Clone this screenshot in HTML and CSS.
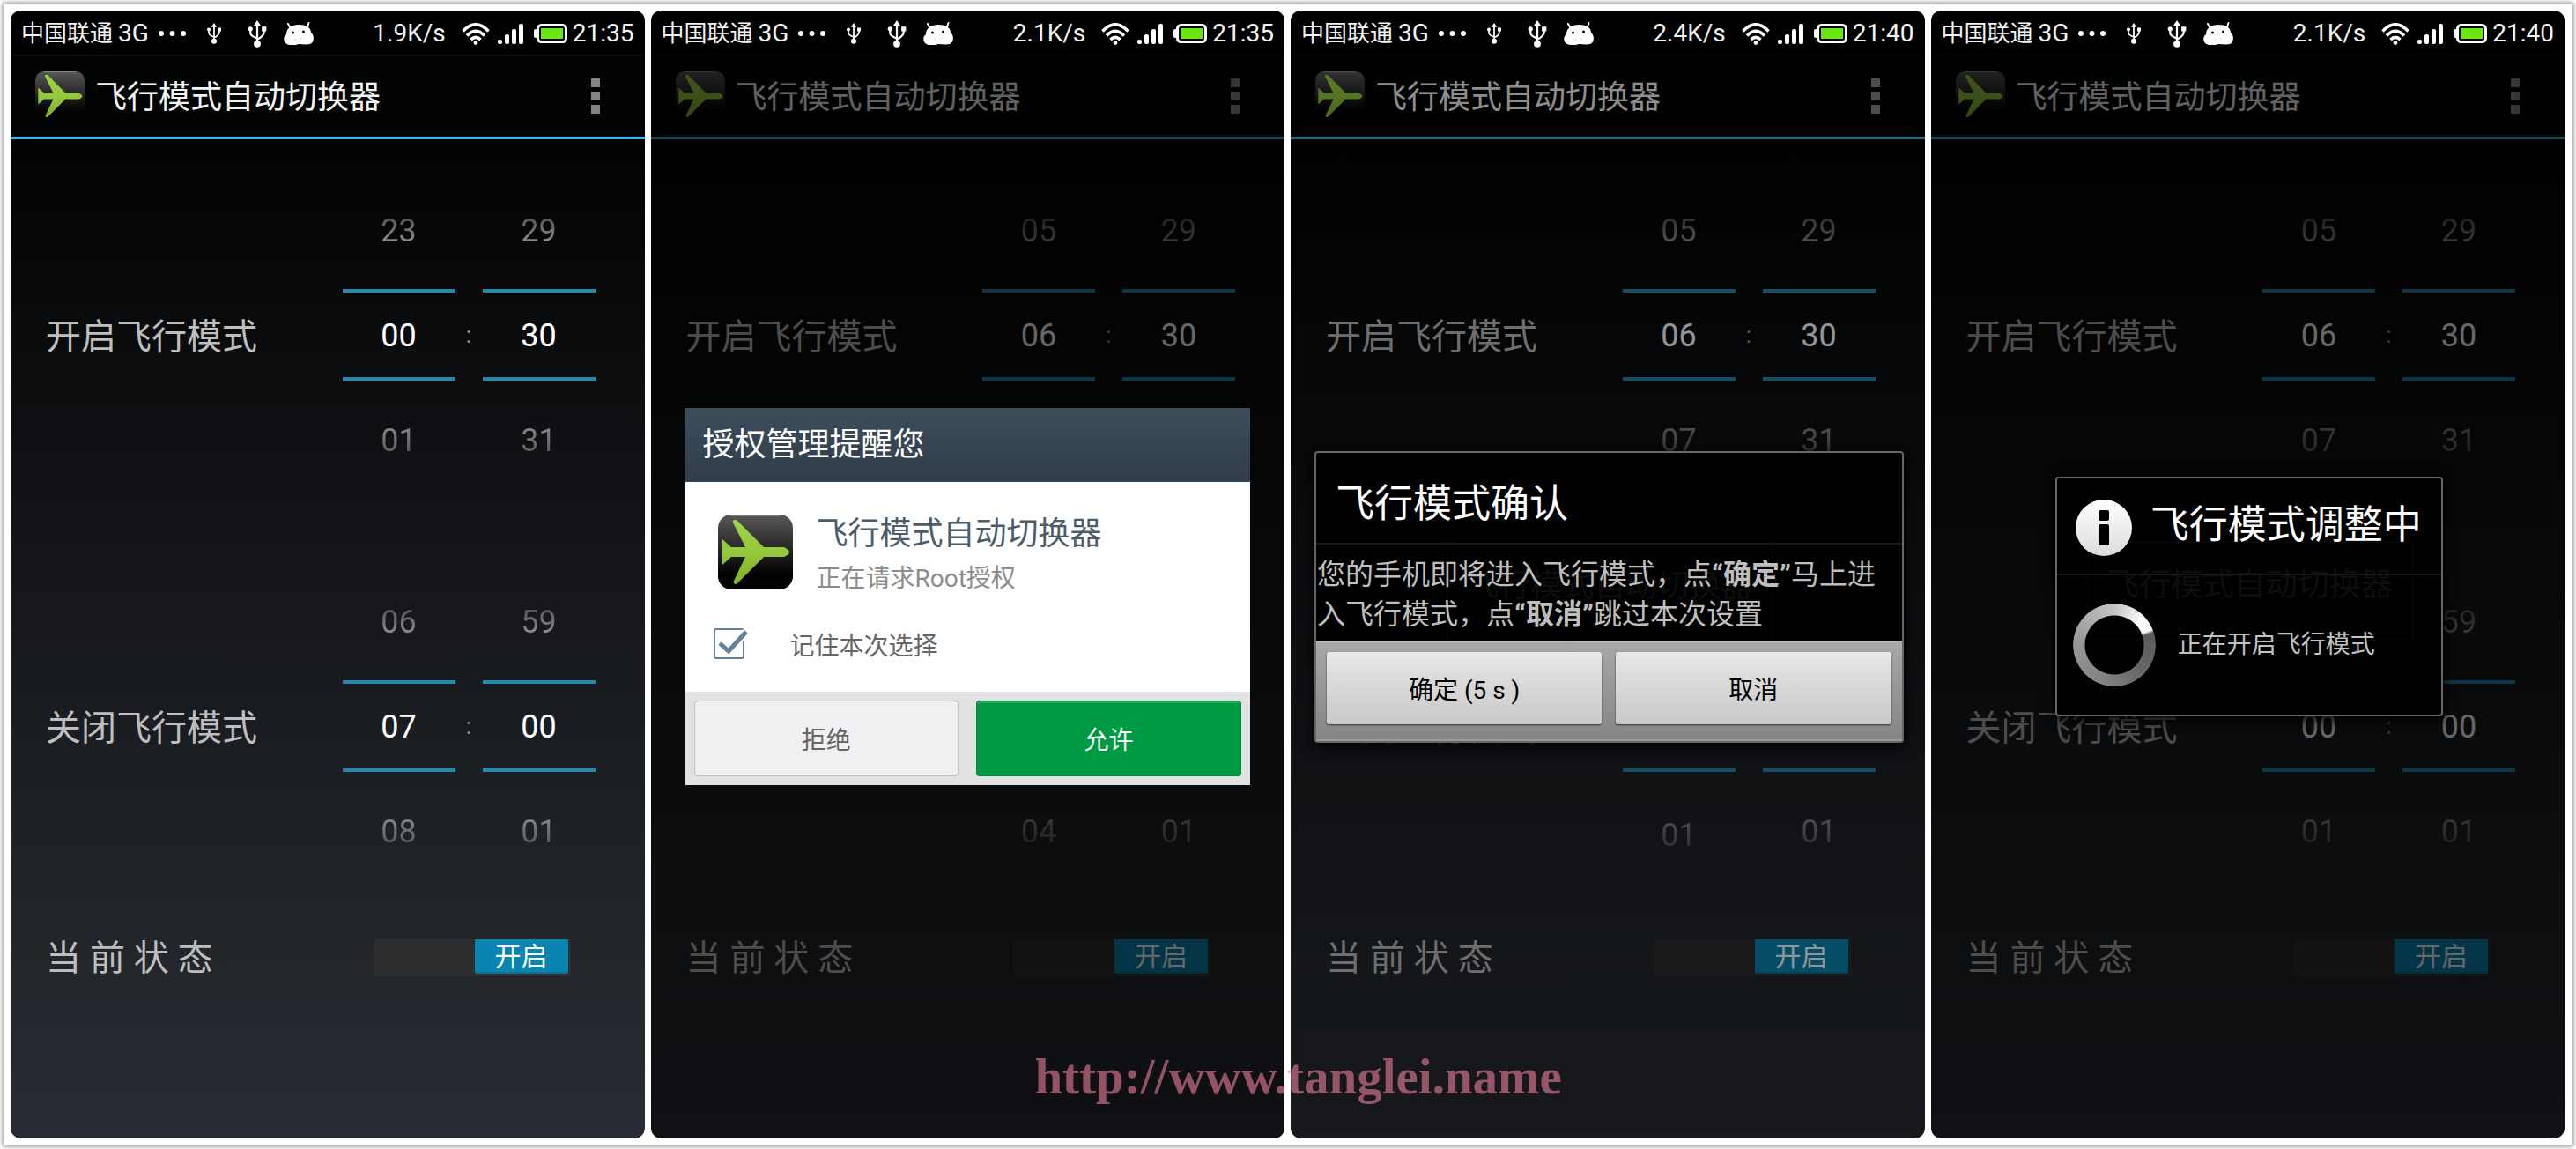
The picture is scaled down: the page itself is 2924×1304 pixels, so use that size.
FILE: index.html
```html
<!DOCTYPE html>
<html lang="zh-CN">
<head>
<meta charset="utf-8">
<title>飞行模式自动切换器</title>
<link rel="stylesheet" href="styles.css">
</head>
<body>
<svg class="sprite" aria-hidden="true">
  <defs>
    <linearGradient id="tile" x1="0" y1="0" x2="0" y2="1"><stop offset="0" stop-color="#595757"/><stop offset=".8" stop-color="#020202"/></linearGradient>
    <linearGradient id="leaf" x1="0" y1="0" x2="0" y2="1"><stop offset="0" stop-color="#9fd545"/><stop offset=".5" stop-color="#94c83d"/><stop offset="1" stop-color="#7fae2c"/></linearGradient>
    <linearGradient id="disc" x1="0" y1="0" x2="0" y2="1"><stop offset="0" stop-color="#fff"/><stop offset="1" stop-color="#dcdcdc"/></linearGradient>
    <symbol id="plane" viewBox="0 0 85 85">
      <rect width="85" height="85" rx="15" fill="url(#tile)"/>
      <path d="M15 1h55" stroke="#8b8a8a" stroke-width="1.5"/>
      <path d="M75 37q6 3 6 5.500q0 3-6 5.500H52L22 78q-2 2-4 0-1-1 0-3l13-27H15L5 57V28l10 9h16L17 9q-1-2 1-3t4 1l30 30z" fill="url(#leaf)"/>
    </symbol>
    <symbol id="usb" viewBox="0 0 20 30">
      <g fill="none" stroke="#fff" stroke-width="2.200"><path d="M10 4v22M2.500 9v5q0 3 7.500 6M17.500 9v4q0 4-7.500 8"/></g>
      <path d="M10 0l4 6H6z" fill="#fff"/><circle cx="2.500" cy="9.500" r="2.500" fill="#fff"/><path d="M15 7h5v5h-5z" fill="#fff"/><circle cx="10" cy="26" r="3.800" fill="#fff"/>
    </symbol>
    <symbol id="mascot" viewBox="0 0 34 26">
      <path d="M5 2l3 6M28.500 1l-2 6" stroke="#fff" stroke-width="2" stroke-linecap="round"/>
      <path d="M3 14C3 7 9 3 17 3s14 3 14 9c4 3 4 11-1 13-4 1-9 0-13 0-3 1-6 2-9 1C1 26-1 20 1 16z" fill="#fff"/>
      <circle cx="10.500" cy="12" r="1.500" fill="#000"/><circle cx="22.500" cy="11" r="1.500" fill="#000"/><circle cx="13.500" cy="20" r="1" fill="#ddd"/><circle cx="19.500" cy="19" r="1" fill="#ddd"/>
    </symbol>
    <symbol id="wifi" viewBox="0 0 32 25">
      <g fill="none" stroke="#fff" stroke-width="3.600"><path d="M1.500 9.500q14.500-15.500 29 0M6 14.500q10-10.500 20 0M10.500 19q5.500-5.500 11 0"/></g><circle cx="16" cy="22.500" r="2.400" fill="#fff"/>
    </symbol>
    <symbol id="signal" viewBox="0 0 29 23">
      <g fill="#fff"><rect y="18" width="5" height="5" rx="2"/><rect x="8" y="12" width="5" height="11" rx="2"/><rect x="16" y="6" width="5" height="17" rx="2"/><rect x="24" width="5" height="23" rx="2"/></g>
    </symbol>
    <symbol id="battery" viewBox="0 0 38 22">
      <rect y="6" width="5" height="10" rx="2" fill="#fff"/><rect x="4.500" y="1.500" width="32" height="19" rx="4" fill="#000" stroke="#fff" stroke-width="3"/><rect x="8" y="5" width="25" height="12" fill="#68e810"/>
    </symbol>
    <symbol id="dots" viewBox="0 0 31 6"><g fill="#fff"><circle cx="3" cy="3" r="3"/><circle cx="15.500" cy="3" r="3"/><circle cx="28" cy="3" r="3"/></g></symbol>
    <symbol id="more" viewBox="0 0 10 40"><path d="M0 0h10v10H0zM0 15h10v10H0zM0 30h10v10H0z" fill="#858585"/></symbol>
  </defs>
</svg>

<main class="sheet">
  <section class="phone">
    <header class="status">
      <span class="carrier">中国联通</span><span class="net">3G</span>
      <svg class="i-dots"><use href="#dots"/></svg><svg class="i-usb"><use href="#usb"/></svg><svg class="i-usb-big"><use href="#usb"/></svg><svg class="i-mascot"><use href="#mascot"/></svg>
      <span class="speed">1.9K/s</span><svg class="i-wifi"><use href="#wifi"/></svg><svg class="i-signal"><use href="#signal"/></svg><svg class="i-battery"><use href="#battery"/></svg><span class="clock">21:35</span>
    </header>
    <div class="screen">
      <div class="appbar"><svg class="i-app"><use href="#plane"/></svg><h1>飞行模式自动切换器</h1><button class="more" aria-label="更多选项"><svg><use href="#more"/></svg></button></div>
      <form class="settings">
        <div class="row"><label for="on-h1">开启飞行模式</label>
          <div class="picker"><button type="button" class="prev">23</button><input id="on-h1" value="00"><button type="button" class="next">01</button></div><span class="colon">:</span>
          <div class="picker"><button type="button" class="prev">29</button><input aria-label="开启分钟" value="30"><button type="button" class="next">31</button></div></div>
        <div class="row"><label for="off-h1">关闭飞行模式</label>
          <div class="picker"><button type="button" class="prev">06</button><input id="off-h1" value="07"><button type="button" class="next">08</button></div><span class="colon">:</span>
          <div class="picker"><button type="button" class="prev">59</button><input aria-label="关闭分钟" value="00"><button type="button" class="next">01</button></div></div>
        <div class="state"><label for="sw1">当 前 状 态</label><span class="switch"><input id="sw1" type="checkbox" role="switch" checked><span class="thumb">开启</span></span></div>
      </form>
    </div>
  </section>

  <section class="phone">
    <header class="status">
      <span class="carrier">中国联通</span><span class="net">3G</span>
      <svg class="i-dots"><use href="#dots"/></svg><svg class="i-usb"><use href="#usb"/></svg><svg class="i-usb-big"><use href="#usb"/></svg><svg class="i-mascot"><use href="#mascot"/></svg>
      <span class="speed">2.1K/s</span><svg class="i-wifi"><use href="#wifi"/></svg><svg class="i-signal"><use href="#signal"/></svg><svg class="i-battery"><use href="#battery"/></svg><span class="clock">21:35</span>
    </header>
    <div class="screen">
      <div class="appbar"><svg class="i-app"><use href="#plane"/></svg><h1>飞行模式自动切换器</h1><button class="more" aria-label="更多选项"><svg><use href="#more"/></svg></button></div>
      <form class="settings">
        <div class="row"><label for="on-h2">开启飞行模式</label>
          <div class="picker"><button type="button" class="prev">05</button><input id="on-h2" value="06"><button type="button" class="next"></button></div><span class="colon">:</span>
          <div class="picker"><button type="button" class="prev">29</button><input aria-label="开启分钟" value="30"><button type="button" class="next"></button></div></div>
        <div class="row"><label for="off-h2"></label>
          <div class="picker"><button type="button" class="prev"></button><input id="off-h2" value=""><button type="button" class="next">04</button></div><span class="colon"></span>
          <div class="picker"><button type="button" class="prev"></button><input aria-label="关闭分钟" value=""><button type="button" class="next">01</button></div></div>
        <div class="state"><label for="sw2">当 前 状 态</label><span class="switch"><input id="sw2" type="checkbox" role="switch" checked><span class="thumb">开启</span></span></div>
      </form>
      <div class="dim">
        <div class="grant" role="dialog" aria-labelledby="grant-title">
          <h2 id="grant-title">授权管理提醒您</h2>
          <div class="grant-body">
            <div class="grant-app"><svg class="i-grant"><use href="#plane"/></svg><div><h3>飞行模式自动切换器</h3><p>正在请求Root授权</p></div></div>
            <label class="remember"><span class="tick"><input type="checkbox" checked><svg viewBox="0 0 40 36"><path d="M8 18l9 9L37 4" fill="none" stroke="#fff" stroke-width="9"/><path d="M7 17l10 9L37 4" fill="none" stroke="#67819a" stroke-width="5"/></svg></span>记住本次选择</label>
          </div>
          <div class="grant-actions"><button>拒绝</button><button class="allow">允许</button></div>
        </div>
      </div>
    </div>
  </section>

  <section class="phone">
    <header class="status">
      <span class="carrier">中国联通</span><span class="net">3G</span>
      <svg class="i-dots"><use href="#dots"/></svg><svg class="i-usb"><use href="#usb"/></svg><svg class="i-usb-big"><use href="#usb"/></svg><svg class="i-mascot"><use href="#mascot"/></svg>
      <span class="speed">2.4K/s</span><svg class="i-wifi"><use href="#wifi"/></svg><svg class="i-signal"><use href="#signal"/></svg><svg class="i-battery"><use href="#battery"/></svg><span class="clock">21:40</span>
    </header>
    <div class="screen">
      <div class="appbar"><svg class="i-app"><use href="#plane"/></svg><h1>飞行模式自动切换器</h1><button class="more" aria-label="更多选项"><svg><use href="#more"/></svg></button></div>
      <form class="settings">
        <div class="row"><label for="on-h3">开启飞行模式</label>
          <div class="picker"><button type="button" class="prev">05</button><input id="on-h3" value="06"><button type="button" class="next">07</button></div><span class="colon">:</span>
          <div class="picker"><button type="button" class="prev">29</button><input aria-label="开启分钟" value="30"><button type="button" class="next">31</button></div></div>
        <div class="row"><label for="off-h3">关闭飞行模式</label>
          <div class="picker"><button type="button" class="prev"></button><input id="off-h3" value="00"><button type="button" class="next rolling">01</button></div><span class="colon"></span>
          <div class="picker"><button type="button" class="prev"></button><input aria-label="关闭分钟" value="00"><button type="button" class="next">01</button></div></div>
        <div class="state"><label for="sw3">当 前 状 态</label><span class="switch"><input id="sw3" type="checkbox" role="switch" checked><span class="thumb">开启</span></span></div>
      </form>
      <div class="dim dim-light">
        <div class="dialog confirm" role="dialog" aria-labelledby="confirm-title">
          <div class="ghost" aria-hidden="true">飞行模式自动切换器</div>
          <h2 id="confirm-title">飞行模式确认</h2>
          <p>您的手机即将进入飞行模式，点<b>“确定”</b>马上进入飞行模式，点<b>“取消”</b>跳过本次设置</p>
          <div class="confirm-actions"><button>确定 (5 s )</button><button>取消</button></div>
        </div>
      </div>
    </div>
  </section>

  <section class="phone">
    <header class="status">
      <span class="carrier">中国联通</span><span class="net">3G</span>
      <svg class="i-dots"><use href="#dots"/></svg><svg class="i-usb"><use href="#usb"/></svg><svg class="i-usb-big"><use href="#usb"/></svg><svg class="i-mascot"><use href="#mascot"/></svg>
      <span class="speed">2.1K/s</span><svg class="i-wifi"><use href="#wifi"/></svg><svg class="i-signal"><use href="#signal"/></svg><svg class="i-battery"><use href="#battery"/></svg><span class="clock">21:40</span>
    </header>
    <div class="screen">
      <div class="appbar"><svg class="i-app"><use href="#plane"/></svg><h1>飞行模式自动切换器</h1><button class="more" aria-label="更多选项"><svg><use href="#more"/></svg></button></div>
      <form class="settings">
        <div class="row"><label for="on-h4">开启飞行模式</label>
          <div class="picker"><button type="button" class="prev">05</button><input id="on-h4" value="06"><button type="button" class="next">07</button></div><span class="colon">:</span>
          <div class="picker"><button type="button" class="prev">29</button><input aria-label="开启分钟" value="30"><button type="button" class="next">31</button></div></div>
        <div class="row"><label for="off-h4">关闭飞行模式</label>
          <div class="picker"><button type="button" class="prev"></button><input id="off-h4" value="00"><button type="button" class="next">01</button></div><span class="colon">:</span>
          <div class="picker"><button type="button" class="prev">59</button><input aria-label="关闭分钟" value="00"><button type="button" class="next">01</button></div></div>
        <div class="state"><label for="sw4">当 前 状 态</label><span class="switch"><input id="sw4" type="checkbox" role="switch" checked><span class="thumb">开启</span></span></div>
      </form>
      <div class="dim">
        <div class="dialog progress" role="dialog" aria-labelledby="progress-title">
          <div class="ghost" aria-hidden="true">飞行模式自动切换器</div>
          <div class="progress-head">
            <svg class="i-info" viewBox="0 0 64 64"><circle cx="32" cy="32" r="32" fill="url(#disc)"/><rect x="26" y="12" width="12" height="12" rx="2"/><rect x="26" y="28" width="12" height="24" rx="2"/></svg>
            <h2 id="progress-title">飞行模式调整中</h2>
          </div>
          <div class="progress-body"><span class="spinner"></span><p>正在开启飞行模式</p></div>
        </div>
      </div>
    </div>
  </section>
  <a class="watermark" href="http://www.tanglei.name">http://www.tanglei.name</a>
</main>
</body>
</html>
```
FILE: styles.css
```css
* { box-sizing: border-box; }

body {
  margin: 0;
  padding: 4px;
  min-height: 100vh;
  display: flex;
  background: #fff;
  font-family: Roboto, "Noto Sans CJK SC", sans-serif;
}

h1, h2, h3, p { margin: 0; font-weight: 400; }
button, input { font-family: inherit; margin: 0; padding: 0; border: 0; background: none; }
svg { display: block; flex: none; }
.sprite { position: absolute; width: 0; height: 0; }

/* white sheet that holds the four phones */
.sheet {
  flex: 1;
  position: relative;
  display: grid;
  grid-template-columns: repeat(4, minmax(0, 1fr));
  gap: 7px;
  padding: 8px 9px 8px 8px;
  background: #fff;
  box-shadow: 0 0 5px 1px rgba(0, 0, 0, .45);
}

.phone {
  display: flex;
  flex-direction: column;
  border-radius: 12px;
  overflow: hidden;
  background: linear-gradient(#000, #020303 12%, #15171b 52%, #23272c 85%, #282b33);
}

/* status bar */
.status {
  height: 50px;
  padding: 2px 12px 0;
  display: flex;
  align-items: center;
  background: #000;
  color: #f4f4f4;
  font-size: 28px;
  line-height: 32px;
}
.carrier { font-size: 26px; }
.net { margin-left: 6px; }
.i-dots { width: 31px; height: 6px; margin-left: 11px; }
.i-usb { width: 20px; height: 24px; margin-left: 22px; }
.i-usb-big { width: 22px; height: 31px; margin-left: 28px; }
.i-mascot { width: 34px; height: 26px; margin-left: 19px; }
.speed { margin-left: auto; }
.i-wifi { width: 32px; height: 25px; margin-left: 18px; }
.i-signal { width: 29px; height: 23px; margin-left: 9px; }
.i-battery { width: 38px; height: 22px; margin-left: 12px; }
.clock { margin-left: 6px; }

/* app */
.screen { flex: 1; position: relative; }
.appbar {
  height: 96px;
  padding: 0 51px 0 28px;
  display: flex;
  align-items: center;
  background: #020303;
  border-top: 1px solid #111;
  border-bottom: 3px solid #33b5e5;
}
.i-app { width: 56px; height: 56px; }
.appbar h1 { flex: 1; margin-left: 12px; padding-top: 4px; font-size: 36px; line-height: 48px; color: #f3f3f3; }
.more svg { width: 10px; height: 40px; }

.settings { padding-top: 36px; color: #bebebe; font-size: 40px; line-height: 52px; }
.row { display: flex; align-items: center; padding: 0 56px 0 40px; margin-bottom: 72px; }
.row label { flex: 1; padding-top: 6px; }
.colon { width: 31px; text-align: center; font-size: 26px; color: #999; }

.picker { width: 128px; display: flex; flex-direction: column; }
.picker button {
  height: 134px;
  padding-top: 2px;
  font-size: 36px;
  line-height: 132px;
  color: transparent;
  -webkit-background-clip: text;
  background-clip: text;
}
.picker .prev { background-image: linear-gradient(#565656 54px, #8c8c8c 80px); }
.picker .next { background-image: linear-gradient(#858585 54px, #565656 84px); }
.picker .rolling { padding-top: 6px; }
.picker input {
  width: 100%;
  height: 104px;
  padding-top: 2px;
  border-top: 4px solid #2a87ab;
  border-bottom: 4px solid #2a87ab;
  text-align: center;
  font-size: 36px;
  color: #fff;
}

.state { margin-top: -16px; padding: 0 84px 0 40px; display: flex; justify-content: space-between; align-items: flex-start; }
.state label { line-height: 44px; }
.switch { position: relative; width: 224px; height: 42px; padding: 0 3px 3px 0; display: flex; justify-content: flex-end; background: #2e2e30; }
.switch input { position: absolute; inset: 0; width: 100%; height: 100%; appearance: none; }
.thumb { width: 106px; text-align: center; font-size: 30px; line-height: 39px; color: #fff; background: #0a84b1; border-radius: 0 0 3px 3px; box-shadow: inset 0 -2px #087299; }

/* modal layer */
.dim { position: absolute; inset: 0; display: flex; align-items: center; justify-content: center; padding: 0 24px 0 27px; background: rgba(0, 0, 0, .6); }
.dim-light { background: rgba(0, 0, 0, .42); }

.grant { flex: 1; margin: 0 15px 0 12px; background: #fff; }
.grant h2 { padding: 2px 20px 0; height: 84px; font-size: 36px; line-height: 81px; color: #fff; background: linear-gradient(#3c4d5b, #313d4a); border-bottom: 1px solid #2c4f6e; }
.grant-body { padding: 37px 28px 0 37px; height: 238px; }
.grant-app { display: flex; gap: 27px; }
.i-grant { width: 85px; height: 85px; }
.grant h3 { font-size: 36px; line-height: 44px; color: #4b5d6b; }
.grant p { margin-top: 11px; font-size: 28px; line-height: 36px; color: #8c8c8c; }
.remember { display: flex; align-items: center; height: 40px; margin: 36px 0 0 -5px; font-size: 28px; color: #666; }
.tick { position: relative; width: 87px; height: 36px; }
.tick input { display: block; width: 35px; height: 35px; appearance: none; border: 2px solid #67819a; border-radius: 3px; }
.tick svg { position: absolute; left: 0; top: 0; width: 40px; height: 36px; }
.grant-actions { display: flex; gap: 20px; padding: 10px; background: #e2e2e4; }
.grant-actions button { flex: 1; height: 86px; font-size: 28px; color: #666; background: #f0f0f2; border: 1px solid #c0c0c2; border-bottom-width: 2px; border-radius: 4px; }
.grant-actions .allow { color: #fff; background: #009a44; border-color: #008a3c; box-shadow: inset 0 2px #28a659; }

.dialog { position: relative; background: #000; border: 2px solid #666; border-radius: 4px; box-shadow: 0 4px 16px #000; }
.dialog h2 { position: relative; font-size: 44px; line-height: 60px; color: #fff; }
.ghost {
  position: absolute;
  left: 50%;
  width: 370px;
  height: 112px;
  margin-left: -184px;
  border: 1px solid #080808;
  text-align: center;
  font-size: 36px;
  line-height: 96px;
  color: #0e0e0e;
}

.confirm { flex: 1; }
.confirm h2 { padding: 28px 22px 14px; border-bottom: 2px solid #191919; }
.confirm .ghost { top: 102px; }
.confirm p { position: relative; padding: 12px 0 8px 1px; font-size: 32px; line-height: 45px; color: #bfbfbf; }
.confirm-actions { position: relative; display: flex; gap: 16px; padding: 11px 12px 17px; background: linear-gradient(#a8a8a8, #858585); border-top: 1px solid #bbb; border-bottom: 2px solid #999; }
.confirm-actions button { flex: 1; height: 82px; font-size: 28px; color: #000; background: linear-gradient(#e8e8e8, #dadada 40%, #c9c9c9); border-radius: 3px; box-shadow: 0 1px 2px #333; }

.progress .ghost { top: 72px; }
.progress-head { position: relative; display: flex; align-items: center; gap: 21px; height: 110px; padding: 0 22px 0 21px; border-bottom: 2px solid #191919; }
.progress-head h2 { padding-bottom: 2px; }
.i-info { width: 64px; height: 64px; margin-top: 4px; }
.progress-body { position: relative; display: flex; align-items: center; gap: 25px; height: 158px; padding: 0 18px; color: #c2c2c2; font-size: 28px; line-height: 36px; }
.spinner {
  width: 94px;
  height: 94px;
  border-radius: 50%;
  background: conic-gradient(#c4c4c4, #fff 50deg, #f4f4f4 68deg, #5c5c5c 72deg, #666 130deg, #808080 190deg, #9a9a9a 280deg, #c4c4c4);
  -webkit-mask: radial-gradient(circle, transparent 33px, #000 34px);
  mask: radial-gradient(circle, transparent 33px, #000 34px);
}

.watermark {
  position: absolute;
  left: 40%;
  bottom: 46px;
  padding-left: 4px;
  font: bold 57px/64px "Liberation Serif", serif;
  color: rgba(236, 128, 156, .6);
  text-decoration: none;
}
```
